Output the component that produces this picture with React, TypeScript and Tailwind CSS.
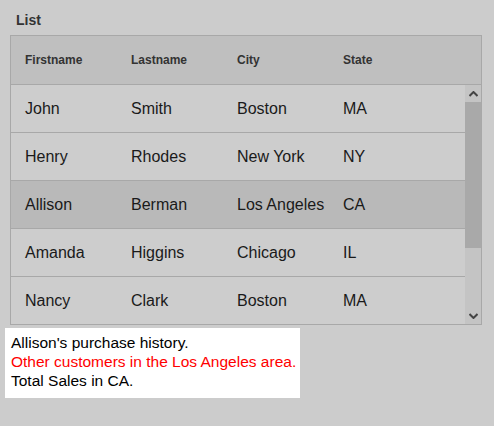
const COLUMNS = ["Firstname", "Lastname", "City", "State"];

const ROWS = [
  ["John", "Smith", "Boston", "MA"],
  ["Henry", "Rhodes", "New York", "NY"],
  ["Allison", "Berman", "Los Angeles", "CA"],
  ["Amanda", "Higgins", "Chicago", "IL"],
  ["Nancy", "Clark", "Boston", "MA"],
];

const SELECTED = 2;

function Chevron({ up }: { up?: boolean }) {
  return (
    <svg width="9" height="6" viewBox="0 0 9 6" className="block">
      <path
        d={up ? "M0.5 5 L4.5 1 L8.5 5" : "M0.5 1 L4.5 5 L8.5 1"}
        fill="none"
        stroke="#444"
        strokeWidth="2"
      />
    </svg>
  );
}

function ScrollBar() {
  return (
    <div className="w-[16px] shrink-0 bg-[#c4c4c4] flex flex-col">
      <div className="h-[17px] flex items-center justify-center">
        <Chevron up />
      </div>
      <div className="h-[146px] bg-[#a9a9a9]" />
      <div className="flex-1" />
      <div className="h-[17px] flex items-center justify-center">
        <Chevron />
      </div>
    </div>
  );
}

export default function App() {
  return (
    <div className="w-[494px] h-[426px] bg-[#cccccc] font-['Liberation_Sans',Arial,sans-serif] overflow-hidden">
      <div className="pl-[16px] pt-[12px] text-[14px] leading-[16px] font-bold text-[#333]">
        List
      </div>

      {/* table */}
      <div className="ml-[10px] mt-[7px] w-[472px] border border-[#a8a8a8]">
        <div className="h-[49px] bg-[#bfbfbf] border-b border-[#a8a8a8] grid grid-cols-[106px_106px_106px_106px] items-center">
          {COLUMNS.map((c) => (
            <div key={c} className="pl-[14px] text-[12px] font-bold text-[#333]">
              {c}
            </div>
          ))}
        </div>
        <div className="flex h-[239px]">
          <div className="flex-1 flex flex-col">
            {ROWS.map((row, i) => (
              <div
                key={row[0]}
                className={`h-[47px] shrink-0 grid grid-cols-[106px_106px_106px_106px] items-center text-[16px] text-[#1a1a1a] ${
                  i === SELECTED ? "bg-[#b9b9b9]" : "bg-[#cdcdcd]"
                } ${i < ROWS.length - 1 ? "h-[48px] border-b border-[#a8a8a8]" : ""}`}
              >
                {row.map((cell, j) => (
                  <div key={j} className="pl-[14px] whitespace-nowrap">
                    {cell}
                  </div>
                ))}
              </div>
            ))}
          </div>
          <ScrollBar />
        </div>
      </div>

      {/* detail box */}
      <div className="ml-[5px] mt-[3px] w-[295px] bg-white pl-[6px] pt-[5px] pb-[8px] text-[15.5px] leading-[19px] text-black">
        <div>Allison's purchase history.</div>
        <div className="text-[#ff0000]">Other customers in the Los Angeles area.</div>
        <div>Total Sales in CA.</div>
      </div>
    </div>
  );
}
